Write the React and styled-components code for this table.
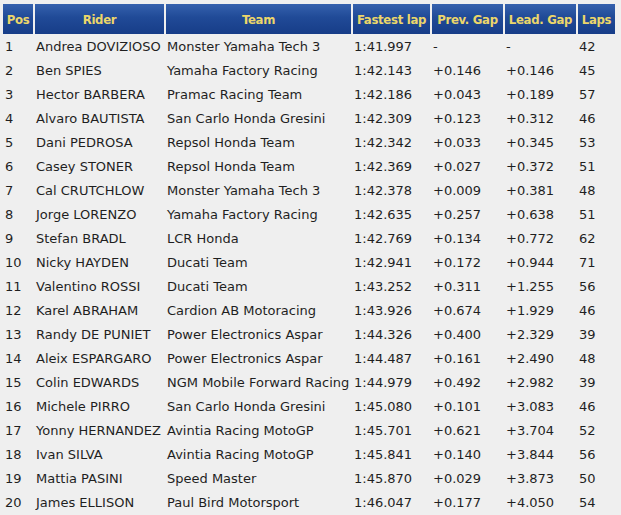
import React from 'react';
import styled, { createGlobalStyle } from 'styled-components';

const rows = [
  [1, 'Andrea DOVIZIOSO', 'Monster Yamaha Tech 3', '1:41.997', '-', '-', 42],
  [2, 'Ben SPIES', 'Yamaha Factory Racing', '1:42.143', '+0.146', '+0.146', 45],
  [3, 'Hector BARBERA', 'Pramac Racing Team', '1:42.186', '+0.043', '+0.189', 57],
  [4, 'Alvaro BAUTISTA', 'San Carlo Honda Gresini', '1:42.309', '+0.123', '+0.312', 46],
  [5, 'Dani PEDROSA', 'Repsol Honda Team', '1:42.342', '+0.033', '+0.345', 53],
  [6, 'Casey STONER', 'Repsol Honda Team', '1:42.369', '+0.027', '+0.372', 51],
  [7, 'Cal CRUTCHLOW', 'Monster Yamaha Tech 3', '1:42.378', '+0.009', '+0.381', 48],
  [8, 'Jorge LORENZO', 'Yamaha Factory Racing', '1:42.635', '+0.257', '+0.638', 51],
  [9, 'Stefan BRADL', 'LCR Honda', '1:42.769', '+0.134', '+0.772', 62],
  [10, 'Nicky HAYDEN', 'Ducati Team', '1:42.941', '+0.172', '+0.944', 71],
  [11, 'Valentino ROSSI', 'Ducati Team', '1:43.252', '+0.311', '+1.255', 56],
  [12, 'Karel ABRAHAM', 'Cardion AB Motoracing', '1:43.926', '+0.674', '+1.929', 46],
  [13, 'Randy DE PUNIET', 'Power Electronics Aspar', '1:44.326', '+0.400', '+2.329', 39],
  [14, 'Aleix ESPARGARO', 'Power Electronics Aspar', '1:44.487', '+0.161', '+2.490', 48],
  [15, 'Colin EDWARDS', 'NGM Mobile Forward Racing', '1:44.979', '+0.492', '+2.982', 39],
  [16, 'Michele PIRRO', 'San Carlo Honda Gresini', '1:45.080', '+0.101', '+3.083', 46],
  [17, 'Yonny HERNANDEZ', 'Avintia Racing MotoGP', '1:45.701', '+0.621', '+3.704', 52],
  [18, 'Ivan SILVA', 'Avintia Racing MotoGP', '1:45.841', '+0.140', '+3.844', 56],
  [19, 'Mattia PASINI', 'Speed Master', '1:45.870', '+0.029', '+3.873', 50],
  [20, 'James ELLISON', 'Paul Bird Motorsport', '1:46.047', '+0.177', '+4.050', 54],
];

const columns = [
  { label: 'Pos', width: 30 },
  { label: 'Rider', width: 129 },
  { label: 'Team', width: 185 },
  { label: 'Fastest lap', width: 77 },
  { label: 'Prev. Gap', width: 71 },
  { label: 'Lead. Gap', width: 71 },
  { label: 'Laps', width: 37 },
];

const GlobalStyle = createGlobalStyle`
  html, body {
    margin: 0;
    background: #efefef;
  }
`;

const App = () => (
  <>
    <GlobalStyle />
    <Results>
      <colgroup>
        {columns.map((c) => (
          <col key={c.label} style={{ width: c.width }} />
        ))}
      </colgroup>
      <thead>
        <tr>
          {columns.map((c) => (
            <HeadCell key={c.label}>{c.label}</HeadCell>
          ))}
        </tr>
      </thead>
      <tbody>
        {rows.map((r) => (
          <Row key={r[0]}>
            {r.map((v, i) => (
              <Cell key={i} first={i === 0}>
                {v}
              </Cell>
            ))}
          </Row>
        ))}
      </tbody>
    </Results>
  </>
);

export default App;

const Results = styled.table`
  table-layout: fixed;
  border-collapse: separate;
  border-spacing: 2px 0;
  margin: 4px 0 0 1px;
  font-family: 'DejaVu Sans', Verdana, sans-serif;
  font-size: 13px;
  color: #1f1f1f;
`;

const HeadCell = styled.th`
  height: 30px;
  padding: 0;
  text-align: center;
  font-family: 'DejaVu Sans Condensed', 'DejaVu Sans', Tahoma, sans-serif;
  font-size: 13px;
  letter-spacing: -0.3px;
  font-weight: bold;
  color: #ecd66a;
  background: linear-gradient(to bottom, #3561ad 0%, #204a97 45%, #173d88 100%);
  white-space: nowrap;
  overflow: hidden;
`;

const Row = styled.tr`
  height: 24px;
`;

const Cell = styled.td`
  padding: 0 0 0 ${({ first }) => (first ? '2px' : '1px')};
  white-space: nowrap;
  overflow: hidden;
`;
